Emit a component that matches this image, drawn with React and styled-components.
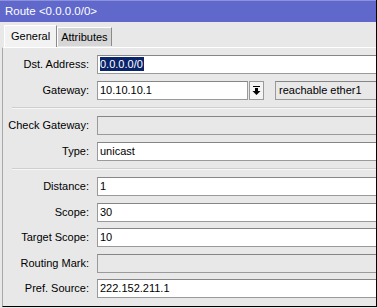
import React from "react";
import styled, { createGlobalStyle } from "styled-components";

const Global = createGlobalStyle`
  html, body {
    margin: 0;
    padding: 0;
    background: #e8e8e8;
  }
  body {
    font-family: "Liberation Sans", Arial, sans-serif;
    font-size: 11px;
    color: #000;
  }
`

const Window = styled.div`
  width: 377px;
  height: 307px;
  box-sizing: border-box;
  border-right: 1px solid #000;
  display: flex;
  flex-direction: column;
  background: #e8e8e8;
  overflow: hidden;
`

const TitleBar = styled.div`
  height: 22px;
  box-sizing: border-box;
  border-top: 1px solid #8c91dc;
  background: #6068cc;
  color: #fff;
  font-size: 11.5px;
  line-height: 21px;
  padding-left: 5px;
  white-space: nowrap;
`

const TabRow = styled.div`
  display: flex;
  align-items: flex-end;
  height: 22px;
  margin-top: 3px;
  padding-left: 4px;
`

const Tab = styled.div`
  box-sizing: border-box;
  height: ${p => (p.active ? "22px" : "19px")};
  margin-bottom: ${p => (p.active ? "0" : "1px")};
  padding: ${p => (p.active ? "3px 6px 0 6px" : "2px 3px 0 3px")};
  line-height: 15px;
  background: ${p => (p.active ? "#f2f2f2" : "#d6d6d6")};
  border-top: 1px solid #fff;
  border-left: 1px solid #fff;
  border-right: 1px solid #8a8a8a;
`

const Panel = styled.div`
  flex: 1;
  margin-left: 2px;
  border-top: 1px solid #fff;
  border-left: 1px solid #a8a8a8;
  border-bottom: 1px solid #000;
  padding-top: 7px;
`

const Section = styled.div`
  display: grid;
  grid-template-columns: 86px 1fr;
  column-gap: 8px;
  row-gap: ${p => p.gap || "7px"};
`

const Divider = styled.div`
  height: 0;
  margin: 7px 0 7px 9px;
  border-top: 1px solid #cfcfcf;
  border-bottom: 1px solid #f6f6f6;
`

const Label = styled.div`
  text-align: right;
  line-height: 19px;
  white-space: nowrap;
`

const Field = styled.div`
  height: 19px;
  box-sizing: border-box;
  border: 1px solid #9a9a9a;
  border-top-color: #868686;
  border-right: none;
  background: ${p => (p.disabled ? "#e8e8e8" : "#fff")};
  padding-left: 2px;
  line-height: 17px;
  white-space: nowrap;
  overflow: hidden;
`

const Selected = styled.span`
  background: #0a246a;
  color: #fff;
  padding: 1px 1px 1px 0;
`

const Combo = styled.div`
  display: flex;
  align-items: stretch;
`

const ComboInput = styled(Field)`
  width: 151px;
  border-right: 1px solid #9a9a9a;
`

const DropButton = styled.div`
  width: 15px;
  height: 19px;
  box-sizing: border-box;
  margin-left: 1px;
  border: 1px solid #9a9a9a;
  background: #f4f4f4;
  display: flex;
  align-items: center;
  justify-content: center;
`

const Status = styled(Field)`
  flex: 1;
  margin-left: 11px;
  background: #e8e8e8;
  padding-left: 3px;
`

const DropIcon = () => (
  <svg width="9" height="9" viewBox="0 0 9 9">
    <rect x="1" y="0" width="7" height="1" fill="#000" />
    <rect x="3" y="2" width="3" height="3" fill="#000" />
    <polygon points="0.5,5 8.5,5 4.5,9" fill="#000" />
  </svg>
)

export default function App() {
  return (
    <Window>
      <Global />
      <TitleBar>Route &lt;0.0.0.0/0&gt;</TitleBar>
      <TabRow>
        <Tab active>General</Tab>
        <Tab>Attributes</Tab>
      </TabRow>
      <Panel>
        <Section>
          <Label>Dst. Address:</Label>
          <Field><Selected>0.0.0.0/0</Selected></Field>
          <Label>Gateway:</Label>
          <Combo>
            <ComboInput>10.10.10.1</ComboInput>
            <DropButton><DropIcon /></DropButton>
            <Status>reachable ether1</Status>
          </Combo>
        </Section>
        <Divider />
        <Section>
          <Label>Check Gateway:</Label>
          <Field disabled />
          <Label>Type:</Label>
          <Field>unicast</Field>
        </Section>
        <Divider />
        <Section gap="6.5px">
          <Label>Distance:</Label>
          <Field>1</Field>
          <Label>Scope:</Label>
          <Field>30</Field>
          <Label>Target Scope:</Label>
          <Field>10</Field>
          <Label>Routing Mark:</Label>
          <Field disabled />
          <Label>Pref. Source:</Label>
          <Field>222.152.211.1</Field>
        </Section>
      </Panel>
    </Window>
  );
}
